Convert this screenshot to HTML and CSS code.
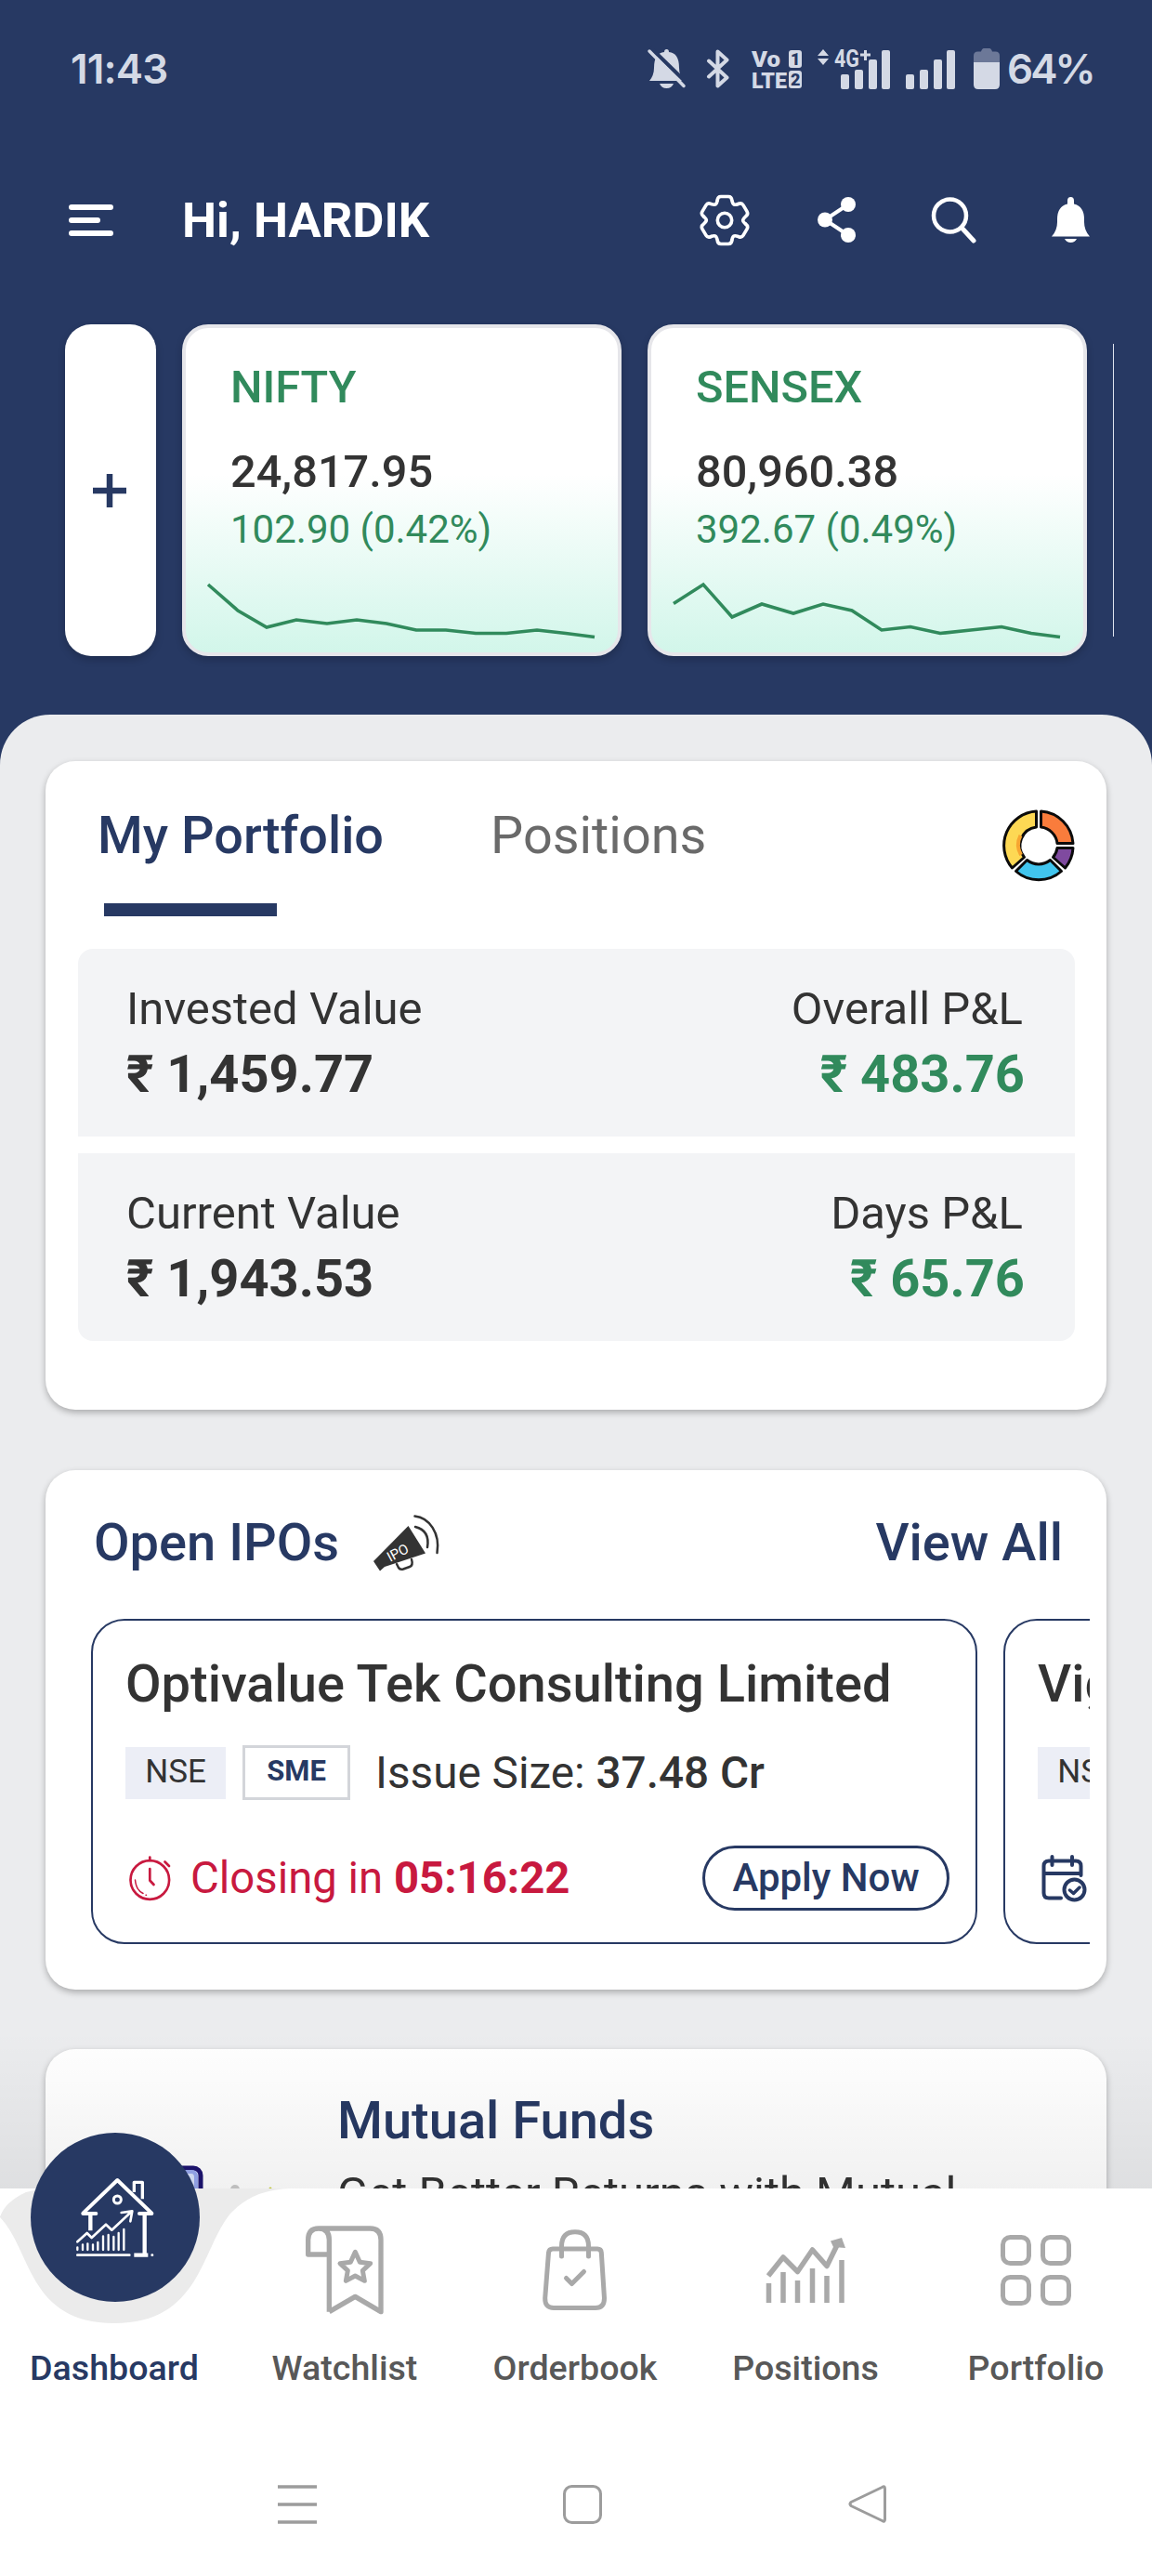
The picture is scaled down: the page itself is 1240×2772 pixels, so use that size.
FILE: index.html
```html
<!DOCTYPE html>
<html lang="en">
<head>
<meta charset="UTF-8">
<meta name="viewport" content="width=device-width, initial-scale=1.0">
<title>Dashboard</title>
<link rel="stylesheet" href="styles.css">
</head>
<body>
<div class="app">

    <!-- Phone status bar -->
    <div class="statusbar">
        <span class="clock">11:43</span>
        <div class="status-icons">
            <svg width="42" height="42" viewBox="0 0 42 42">
                <path fill="#d4d9e5" d="M2 34Q7 28 7 20Q7 4 18 3Q18 0 20.500 0Q23 0 23 3Q34 4 34 20Q34 28 39 34ZM13 37H28Q26 42 20.500 42Q15 42 13 37Z"/>
                <path stroke="#273963" stroke-width="4" d="M3 -2L44 38"/>
                <path stroke="#d4d9e5" stroke-width="3.500" stroke-linecap="round" d="M2 2L39 39.500"/>
            </svg>
            <svg class="bluetooth" width="24" height="42" viewBox="0 0 24 42">
                <path fill="none" stroke="#d4d9e5" stroke-width="4" stroke-linejoin="round" stroke-linecap="round" d="M2 12.500L21.500 30.500L11.500 39.500V2.500L21.500 11.500L2 29.500"/>
            </svg>
            <svg class="volte" width="54" height="42" viewBox="0 0 54 42">
                <text x="0" y="18.500" textLength="31" lengthAdjust="spacingAndGlyphs">Vo</text>
                <text x="0" y="41.500" textLength="38" lengthAdjust="spacingAndGlyphs">LTE</text>
                <rect x="40" y="1" width="14" height="19" rx="3"/>
                <rect x="40" y="23" width="14" height="19" rx="3"/>
                <text class="sim" x="42" y="17">1</text>
                <text class="sim" x="42" y="39">2</text>
            </svg>
            <svg class="network" width="78" height="44" viewBox="0 0 78 44">
                <path d="M0 8L6 1L12 8ZM0 11H12L6 18Z"/>
                <text x="18" y="20" textLength="27" lengthAdjust="spacingAndGlyphs">4G</text>
                <path d="M50 2h3v3.500h4v3h-4V13h-3V8.500h-4v-3h4z"/>
                <rect x="25" y="28" width="9" height="16" rx="2"/>
                <rect x="40" y="23" width="9" height="21" rx="2"/>
                <rect x="55" y="12" width="9" height="32" rx="2"/>
                <rect x="69" y="2" width="9" height="42" rx="2"/>
            </svg>
            <svg class="signal" width="53" height="44" viewBox="0 0 53 44">
                <rect x="0" y="28" width="9" height="16" rx="2"/>
                <rect x="15" y="23" width="9" height="21" rx="2"/>
                <rect x="30" y="12" width="9" height="32" rx="2"/>
                <rect x="44" y="2" width="9" height="42" rx="2"/>
            </svg>
            <svg class="battery" width="28" height="44" viewBox="0 0 28 44">
                <path fill="#6c7898" d="M0 15V8Q0 3.500 4.500 3.500H8Q9 0 11 0H17Q19 0 20 3.500H23.500Q28 3.500 28 8V15Z"/>
                <path fill="#d4d9e5" d="M0 15H28V39Q28 44 23 44H5Q0 44 0 39Z"/>
            </svg>
            <span class="percent">64%</span>
        </div>
    </div>

    <!-- Greeting and actions -->
    <div class="header">
        <svg class="menu" width="48" height="34" viewBox="0 0 48 34">
            <path stroke="#fff" stroke-width="6" stroke-linecap="round" d="M3 3H45M3 17H31M3 31H45"/>
        </svg>
        <h1>Hi, HARDIK</h1>
        <div class="actions">
            <svg width="54" height="56" viewBox="-27 -28 54 56">
                <defs>
                    <path id="tooth" d="M-7.800 -21.500Q-7.500 -25.500 -4 -25.500H4Q7.500 -25.500 7.800 -21.500C9 -16.500 10 -15.800 14.700 -17.500"/>
                </defs>
                <g fill="none" stroke="#fff" stroke-width="3.600" stroke-linecap="round">
                    <use href="#tooth"/>
                    <use href="#tooth" transform="rotate(60)"/>
                    <use href="#tooth" transform="rotate(120)"/>
                    <use href="#tooth" transform="rotate(180)"/>
                    <use href="#tooth" transform="rotate(240)"/>
                    <use href="#tooth" transform="rotate(300)"/>
                    <circle r="7.700"/>
                </g>
            </svg>
            <svg class="share" width="41" height="49" viewBox="0 0 41 49">
                <path fill="none" stroke="#fff" stroke-width="4" d="M33 8L8 24.500L33 41"/>
                <g fill="#fff"><circle cx="8" cy="24.500" r="8"/><circle cx="33" cy="8" r="8"/><circle cx="33" cy="41" r="8"/></g>
            </svg>
            <svg class="search" width="48" height="50" viewBox="0 0 48 50">
                <circle cx="19.500" cy="20" r="17.500" fill="none" stroke="#fff" stroke-width="4.500"/>
                <path stroke="#fff" stroke-width="5" stroke-linecap="round" d="M33 34L45 47"/>
            </svg>
            <svg class="bell" width="41" height="49" viewBox="0 0 41 49">
                <path fill="#fff" d="M0 42.500Q6 36 6 27V24Q6 10 17 7.500V4Q17 0 20.500 0Q24 0 24 4V7.500Q35 10 35 24V27Q35 36 41 42.500ZM14 45H27Q25 49 20.500 49Q16 49 14 45Z"/>
            </svg>
        </div>
    </div>

    <!-- Index quotes -->
    <div class="quotes">
        <div class="add">
            <svg width="36" height="36" viewBox="0 0 36 36"><path stroke="#273963" stroke-width="6.500" d="M18 0V36M0 18H36"/></svg>
        </div>
        <div class="quote">
            <div class="name">NIFTY</div>
            <div class="price">24,817.95</div>
            <div class="change">102.90 (0.42%)</div>
            <svg width="465" height="106" viewBox="200 595 465 106">
                <polyline points="224,629 256,657 287,675 319,667 352,671 384,667 416,671 448,678 480,678 512,681.500 545,681.500 578,678 609,681.500 640,685.500"/>
            </svg>
        </div>
        <div class="quote">
            <div class="name">SENSEX</div>
            <div class="price">80,960.38</div>
            <div class="change">392.67 (0.49%)</div>
            <svg width="465" height="106" viewBox="701 595 465 106">
                <polyline points="725,649.500 757,629 788,664 820,650 854,660 886,650 917,657 949,678 980,674.500 1012,681.500 1045,678 1078,674.500 1110,681.500 1141,685.500"/>
            </svg>
        </div>
        <div class="next-quote"></div>
    </div>

    <div class="sheet">
        <!-- Portfolio summary -->
        <div class="card">
            <div class="tabs">
                <div class="tab active">My Portfolio</div>
                <div class="tab">Positions</div>
                <svg class="donut" width="78" height="78" viewBox="-39 -39 78 78">
                    <g stroke="#0b0b0b" stroke-width="3" stroke-linejoin="round">
                        <path fill="#f97c3c" d="M2.500 -37A37 37 0 0 1 37 -2.500H20A20 20 0 0 0 2.500 -20Z"/>
                        <path fill="#7f4a9f" d="M37 2.500A37 37 0 0 1 28.500 24L15.500 12.500A20 20 0 0 0 20 2.500Z"/>
                        <path fill="#41c5ee" d="M24.500 27.500A37 37 0 0 1 -24.500 27.500L-12.500 15.500A20 20 0 0 0 12.500 15.500Z"/>
                        <path fill="#fdd854" d="M-28.500 24A37 37 0 0 1 -2.500 -37V-20A20 20 0 0 0 -15.500 12.500Z"/>
                    </g>
                    <path fill="none" stroke="#f7a531" stroke-width="4" d="M-19.500 -11A22 22 0 0 0 -19 10"/>
                </svg>
            </div>
            <div class="totals">
                <div class="row">
                    <div>
                        <div class="label">Invested Value</div>
                        <div class="value">₹ 1,459.77</div>
                    </div>
                    <div class="right">
                        <div class="label">Overall P&amp;L</div>
                        <div class="value gain">₹ 483.76</div>
                    </div>
                </div>
                <div class="row">
                    <div>
                        <div class="label">Current Value</div>
                        <div class="value">₹ 1,943.53</div>
                    </div>
                    <div class="right">
                        <div class="label">Days P&amp;L</div>
                        <div class="value gain">₹ 65.76</div>
                    </div>
                </div>
            </div>
        </div>

        <!-- Open IPOs -->
        <div class="card">
            <div class="card-head">
                <h2>Open IPOs</h2>
                <svg class="megaphone" width="72" height="64" viewBox="0 0 72 64">
                    <path fill="#333" d="M37.500 12L56 41.500L12 56L7 60.500L0 50L4 46Z"/>
                    <g fill="none" stroke="#333" stroke-width="2.500" stroke-linecap="round">
                        <path d="M45 13Q61 17 58 35M44.500 1.500C60 3 72 20 68.500 41M25 53L27 57Q28.500 59.500 32 58.500L39 56Q43 54.500 41 48"/>
                    </g>
                    <text x="18" y="51" transform="rotate(-28 18 51)">IPO</text>
                </svg>
                <a class="view-all">View All</a>
            </div>
            <div class="ipos">
                <div class="ipo">
                    <h3>Optivalue Tek Consulting Limited</h3>
                    <div class="meta">
                        <span class="exchange">NSE</span>
                        <span class="board">SME</span>
                        <span class="issue">Issue Size: <b>37.48 Cr</b></span>
                    </div>
                    <div class="foot">
                        <svg width="46" height="49" viewBox="0 0 46 49">
                            <g fill="none" stroke="#c8193f" stroke-width="2.700" stroke-linecap="round" stroke-linejoin="round">
                                <circle cx="22.300" cy="26" r="20.800"/>
                                <path d="M22.300 1.500V5M22.300 14V26.500L26.500 31M38.500 6.500L43 11"/>
                                <path stroke-width="1.500" d="M6.500 26Q7.500 37 15 40.500M18 42.200H18.500"/>
                            </g>
                        </svg>
                        <span class="closing">Closing in <b>05:16:22</b></span>
                        <button class="apply">Apply Now</button>
                    </div>
                </div>
                <div class="ipo">
                    <h3>Vigor Plast India Limited</h3>
                    <div class="meta">
                        <span class="exchange">NSE</span>
                    </div>
                    <div class="foot">
                        <svg class="calendar" width="50" height="50" viewBox="0 0 50 50">
                            <g fill="none" stroke="#273963" stroke-width="4" stroke-linecap="round" stroke-linejoin="round">
                                <path d="M42.500 22V12Q42.500 6.500 37 6.500H8Q2.500 6.500 2.500 12V41Q2.500 46.500 8 46.500H21M3 20H42M11.500 2V11M33 2V11"/>
                                <circle cx="35.500" cy="37.500" r="11"/>
                                <path stroke-width="3.500" d="M30.500 38L34.500 41.500L41 35"/>
                            </g>
                        </svg>
                    </div>
                </div>
            </div>
        </div>

        <!-- Mutual funds promo -->
        <div class="card promo">
            <svg width="120" height="60" viewBox="177 2320 120 60">
                <rect x="150" y="2333" width="66" height="70" rx="8" fill="#d9e3fb" stroke="#1d1470" stroke-width="5"/>
                <path fill="none" stroke="#97a8ee" stroke-width="4" d="M180 2337H206Q211 2337 211 2343V2380"/>
                <circle cx="253" cy="2356" r="5" fill="#c9c9c9"/>
                <circle cx="291" cy="2355" r="1.500" fill="#c8cf3a"/>
            </svg>
            <div class="promo-text">
                <h2>Mutual Funds</h2>
                <p>Get Better Returns with Mutual</p>
            </div>
        </div>
    </div>

    <!-- Bottom navigation -->
    <div class="bottom">
        <svg class="notch" width="320" height="150" viewBox="0 0 320 150">
            <path fill="#ebebeb" d="M0 30Q6 14 28 4L46 0H320V150H0Z"/>
            <path fill="#fff" d="M0 18H5L0 30ZM0 31C34 66 30 145 123 145C216 145 216 66 248 27Q272 1 312 0H320V150H0Z"/>
        </svg>
        <div class="home">
            <svg width="84" height="86" viewBox="246 490 252 258">
                <g fill="none" stroke="#fff" stroke-linecap="round" stroke-linejoin="round">
                    <path stroke-width="12" d="M268 606L379 499L490 606M268 607H310M450 607H490"/>
                    <path stroke-width="13" stroke-linecap="butt" d="M292 610V662M467 610V740M433 741H478"/>
                    <path stroke-width="10" stroke-linecap="butt" d="M433 538V506H460V560"/>
                    <circle cx="379" cy="562" r="12" stroke-width="9"/>
                    <path stroke-width="8" d="M250 698L281 670L296 685L342 642L361 660L425 600M392 604L427 599L421 632M250 741H418M491 741H492"/>
                    <path stroke-width="7" d="M250 716V724M267 707V724M283 704V724M300 707V724M316 700V724M333 680V724M350 676V724M367 682V724M383 670V724M400 658V724"/>
                </g>
            </svg>
        </div>
        <div class="nav">
            <div class="item active">
                <div class="icon"></div>
                <span>Dashboard</span>
            </div>
            <div class="item">
                <div class="icon">
                    <svg width="86" height="96" viewBox="988 644 256 288">
                        <g fill="none" stroke="#a9a9a9" stroke-width="16" stroke-linejoin="round">
                            <path d="M1066 922V690Q1066 653 1032 653Q998 653 998 690V737H1062M1032 653H1198Q1233 653 1233 690V922L1150 873L1066 922"/>
                            <path stroke-width="15" d="M1150 729L1165 762L1199 766L1174 789L1180 822L1150 806L1120 822L1126 789L1101 766L1135 762Z"/>
                        </g>
                    </svg>
                </div>
                <span>Watchlist</span>
            </div>
            <div class="item">
                <div class="icon">
                    <svg width="70" height="88" viewBox="0 0 70 88">
                        <g fill="none" stroke="#a9a9a9" stroke-width="5" stroke-linecap="round" stroke-linejoin="round">
                            <path d="M11 21H59Q63 21 63.300 25L66.500 74Q66.500 84.500 57 84.500H12Q2.500 84.500 2.700 74L6.500 25Q7 21 11 21ZM20.500 29V18Q20.500 2.700 35 2.700Q49.500 2.700 49.500 18V29M25.500 52.500L31.500 58.500L44.500 45.500"/>
                        </g>
                    </svg>
                </div>
                <span>Orderbook</span>
            </div>
            <div class="item">
                <div class="icon">
                    <svg width="86" height="70" viewBox="0 0 86 70">
                        <path stroke="#a9a9a9" stroke-width="5.500" d="M3.500 49V70M19 37V70M34.500 46V70M50.500 33V70M66 41V70M82 24V70"/>
                        <path fill="none" stroke="#a9a9a9" stroke-width="5.500" stroke-linejoin="round" d="M3 41L19 21L34.500 36.500L50.500 13L66 30.500L77 8"/>
                        <path fill="#a9a9a9" d="M70 3.500L82 0L86 11L73 10Z"/>
                    </svg>
                </div>
                <span>Positions</span>
            </div>
            <div class="item">
                <div class="icon">
                    <svg width="76" height="76" viewBox="0 0 76 76">
                        <g fill="none" stroke="#a9a9a9" stroke-width="5">
                            <rect x="2.500" y="2.500" width="28" height="28" rx="8"/>
                            <rect x="45.500" y="2.500" width="28" height="28" rx="8"/>
                            <rect x="2.500" y="45.500" width="28" height="28" rx="8"/>
                            <rect x="45.500" y="45.500" width="28" height="28" rx="8"/>
                        </g>
                    </svg>
                </div>
                <span>Portfolio</span>
            </div>
        </div>

        <!-- System buttons -->
        <div class="system">
            <svg width="42" height="42" viewBox="0 0 42 42"><path stroke="#9c9c9c" stroke-width="3.500" d="M0 2H42M0 21H42M0 40H42"/></svg>
            <svg width="42" height="42" viewBox="0 0 42 42"><rect x="1.500" y="1.500" width="39" height="39" rx="8" fill="none" stroke="#9c9c9c" stroke-width="3"/></svg>
            <svg width="42" height="42" viewBox="0 0 42 42"><path fill="none" stroke="#9c9c9c" stroke-width="3" stroke-linejoin="round" d="M36.500 2.500Q39.500 .5 39.500 4V37Q39.500 40.500 36.500 38.500L3 22.500Q1 20.500 3 18.500Z"/></svg>
        </div>
    </div>
</div>
</body>
</html>
```
FILE: styles.css
```css
* {
    box-sizing: border-box;
}
body {
    margin: 0;
    font-family: Roboto, "Noto Sans", sans-serif;
    color: #333;
}
h1, h2, h3, p {
    margin: 0;
    font-weight: 500;
}
svg {
    display: block;
    flex: none;
    overflow: visible;
}
.app {
    width: 1240px;
    height: 2772px;
    display: flex;
    flex-direction: column;
    overflow: hidden;
    background: #273963;
}

/* Status bar */
.statusbar {
    height: 148px;
    padding: 0 65px 0 76px;
    display: flex;
    align-items: center;
    justify-content: space-between;
    color: #d4d9e5;
    font-family: Inter, Roboto, sans-serif;
    font-weight: 600;
    font-size: 44px;
    line-height: 60px;
}
.clock {
    letter-spacing: -0.8px;
}
.status-icons {
    display: flex;
    align-items: center;
}
.bluetooth {
    margin-left: 22px;
}
.volte {
    margin-left: 24px;
    font-size: 24.5px;
    font-weight: 900;
    font-family: Roboto, sans-serif;
    fill: #d4d9e5;
}
.volte .sim {
    font-size: 18px;
    fill: #273963;
}
.network {
    margin-left: 17px;
    font-size: 25px;
    font-weight: 700;
    font-family: Roboto, sans-serif;
    fill: #d4d9e5;
}
.signal {
    margin-left: 17px;
    fill: #d4d9e5;
}
.battery {
    margin-left: 20px;
}
.percent {
    width: 91px;
    margin-left: 8px;
    letter-spacing: -3px;
}

/* Header */
.header {
    height: 177px;
    padding: 0 67px 0 74px;
    display: flex;
    align-items: center;
}
.header h1 {
    margin-left: 74px;
    flex: 1;
    color: #fff;
    font-size: 52.5px;
    font-weight: 700;
    line-height: 64px;
}
.actions {
    display: flex;
    align-items: center;
}
.share {
    margin-left: 73px;
}
.search {
    margin-left: 82px;
}
.bell {
    margin-left: 81px;
}

/* Quotes */
.quotes {
    display: flex;
    gap: 28px;
    height: 357px;
    margin: 24px 0 63px 70px;
}
.add, .quote {
    flex: none;
    border-radius: 28px;
    background: #fff;
    box-shadow: 0 4px 8px rgba(0, 0, 0, 0.2);
}
.add {
    width: 98px;
    padding-right: 2px;
    display: flex;
    align-items: center;
    justify-content: center;
}
.quote {
    width: 473px;
    border: 4px solid #e6e6ea;
    padding-top: 36px;
    background: linear-gradient(#fff 45%, #d2f6ea);
}
.name, .price, .change {
    margin-left: 48px;
}
.name {
    color: #318a5c;
    font-size: 48.7px;
    font-weight: 500;
    line-height: 56px;
}
.price {
    margin-top: 35px;
    font-size: 48.7px;
    font-weight: 500;
    line-height: 56px;
}
.change {
    margin-top: 9px;
    color: #318a5c;
    font-size: 42px;
    line-height: 50px;
}
.quote polyline {
    fill: none;
    stroke: #318a5c;
    stroke-width: 3.6;
}
.next-quote {
    width: 1px;
    margin: 21px 0;
    background: #dfe3ee;
}

/* Sheet with the cards */
.sheet {
    height: 1586px;
    padding: 50px 49px 0;
    border-radius: 54px 54px 0 0;
    background: #ebecee;
    overflow: hidden;
}
.card {
    border-radius: 32px;
    background: #fff;
    box-shadow: 0 3px 7px rgba(0, 0, 0, 0.28);
}
.card + .card {
    margin-top: 65px;
}
.tabs {
    display: flex;
    height: 202px;
    padding: 48px 34px 0 56px;
}
.tab {
    margin-right: 115px;
    color: #6a6a6a;
    font-size: 55.8px;
    line-height: 64px;
}
.tab.active {
    color: #273963;
    font-weight: 500;
}
.tab.active::after {
    content: "";
    display: block;
    width: 186px;
    height: 14px;
    margin: 41px 0 0 7px;
    background: #273963;
}
.donut {
    margin: 4px 0 0 auto;
}
.totals {
    display: flex;
    flex-direction: column;
    gap: 18px;
    padding: 0 34px 74px 35px;
}
.row {
    display: flex;
    justify-content: space-between;
    height: 202px;
    padding: 38px 54px 0 52px;
    background: #f3f4f6;
}
.row:first-child {
    border-radius: 16px 16px 0 0;
}
.row:last-child {
    border-radius: 0 0 16px 16px;
}
.label {
    font-size: 49px;
    line-height: 54px;
}
.value {
    margin-top: 11px;
    font-size: 56px;
    font-weight: 700;
    line-height: 64px;
}
.right {
    text-align: right;
}
.right .label {
    margin-right: 2px;
}
.gain {
    color: #318a5c;
}

/* IPO card */
.card-head {
    display: flex;
    height: 160px;
    padding: 46px 47px 0 52px;
}
h2, .view-all {
    color: #273963;
    font-size: 56px;
    font-weight: 500;
    line-height: 64px;
}
.megaphone {
    margin: 2px 0 0 37px;
    font-size: 15px;
    fill: #fff;
}
.view-all {
    margin-left: auto;
}
.ipos {
    display: flex;
    gap: 28px;
    height: 399px;
    margin: 0 18px 0 49px;
    overflow: hidden;
}
.ipo {
    flex: none;
    width: 954px;
    height: 350px;
    padding: 36px 28px 0 35px;
    border: 2px solid #273963;
    border-radius: 36px;
}
.ipo h3 {
    font-size: 56px;
    line-height: 64px;
    white-space: nowrap;
}
.meta {
    display: flex;
    align-items: center;
    height: 59px;
    margin-top: 34px;
}
.exchange {
    width: 108px;
    height: 56px;
    background: #eceef6;
    font-size: 35px;
    line-height: 54px;
    text-align: center;
}
.board {
    width: 116px;
    height: 59px;
    margin-left: 18px;
    border: 3px solid #d3d5da;
    color: #273963;
    font-size: 31px;
    font-weight: 700;
    line-height: 49px;
    text-align: center;
}
.issue {
    margin-left: 27px;
    font-size: 47.7px;
    line-height: 56px;
}
.ipo b {
    font-weight: 500;
}
.foot {
    display: flex;
    align-items: center;
    height: 70px;
    margin-top: 49px;
    padding-left: 4px;
}
.foot .closing {
    margin-left: 20px;
    color: #c8193f;
    font-size: 47.3px;
    line-height: 56px;
}
.foot .closing b {
    font-weight: 700;
}
.apply {
    width: 266px;
    height: 70px;
    margin-left: auto;
    padding: 0;
    border: 3px solid #273963;
    border-radius: 35px;
    background: #fff;
    color: #273963;
    font: 500 42px/60px Roboto, sans-serif;
}

/* Promo, cut off by the bottom navigation */
.promo {
    display: flex;
    height: 400px;
    padding: 45px 0 0 128px;
}
.card.promo {
    margin-top: 64px;
}
.promo svg {
    margin-top: 70px;
}
.promo-text {
    margin-left: 66px;
}
.promo p {
    width: 700px;
    margin-top: 20px;
    font-size: 49px;
    font-weight: 400;
    line-height: 54px;
}

/* Bottom navigation */
.bottom {
    position: relative;
    flex: 1;
    background: #fff;
}
.bottom::before {
    content: "";
    position: absolute;
    left: 0;
    right: 0;
    bottom: 100%;
    height: 170px;
    background: linear-gradient(transparent, rgba(0, 0, 0, 0.055));
}
.notch {
    position: absolute;
    left: 0;
    top: 0;
}
.home {
    position: absolute;
    left: 33px;
    top: -60px;
    width: 182px;
    height: 182px;
    display: flex;
    align-items: center;
    justify-content: center;
    border-radius: 50%;
    background: #273963;
}
.nav {
    position: relative;
    display: grid;
    grid-template-columns: repeat(5, 248px);
    margin-left: -1px;
    color: #585858;
    font-size: 37.6px;
    font-weight: 500;
    line-height: 48px;
}
.item {
    display: flex;
    flex-direction: column;
    align-items: center;
}
.item.active {
    color: #273963;
}
.icon {
    display: flex;
    align-items: center;
    height: 176px;
    margin-bottom: -7px;
}
.system {
    display: flex;
    gap: 265px;
    margin: 102px 0 0 299px;
}
```
